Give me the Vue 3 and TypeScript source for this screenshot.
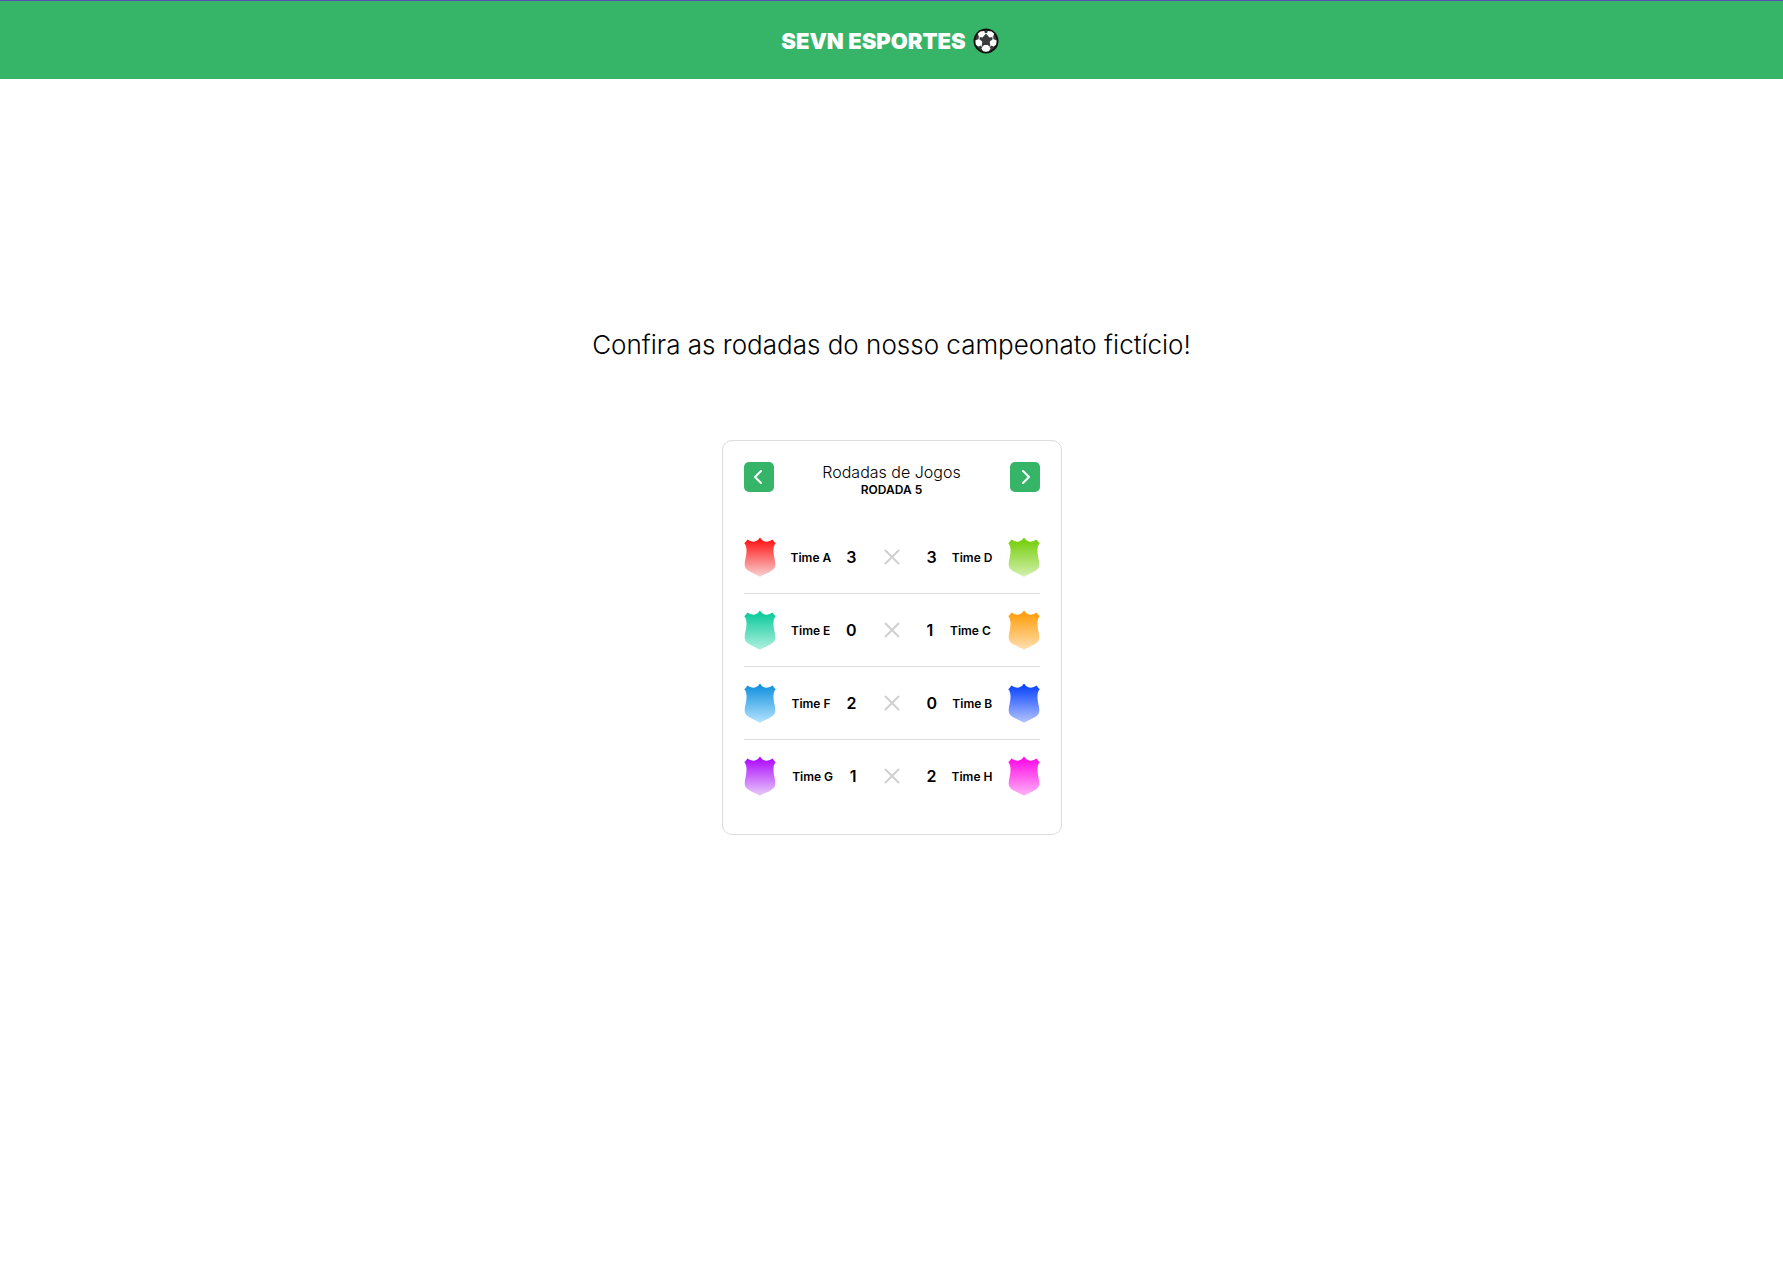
<script setup lang="ts">
import { computed, ref } from 'vue'

interface Team {
  id: string
  name: string
  from: string
  to: string
}

interface Match {
  home: Team
  homeScore: number
  awayScore: number
  away: Team
}

function team(letter: string, from: string, to: string): Team {
  return { id: letter.toLowerCase(), name: `Time ${letter}`, from, to }
}

const a = team('A', '#ff0a0a', '#f8d2d2')
const b = team('B', '#003cff', '#b4c4ff')
const c = team('C', '#ff9900', '#ffe0b2')
const d = team('D', '#70cc00', '#d4f0b0')
const e = team('E', '#00c896', '#b2f0e0')
const f = team('F', '#0a8cdc', '#b4e4ff')
const g = team('G', '#aa00ff', '#e8ccf8')
const h = team('H', '#ff00e6', '#ffb4f6')

const rounds: Record<number, Match[]> = {
  5: [
    { home: a, homeScore: 3, awayScore: 3, away: d },
    { home: e, homeScore: 0, awayScore: 1, away: c },
    { home: f, homeScore: 2, awayScore: 0, away: b },
    { home: g, homeScore: 1, awayScore: 2, away: h },
  ],
}

const round = ref(5)
const matches = computed(() => rounds[round.value] ?? [])
const teams = [a, b, c, d, e, f, g, h]

function go(step: number) {
  if (rounds[round.value + step]) round.value += step
}

const shield =
  'M16 .5Q17.700 3.800 21 4.500Q25.500 5.200 28.500 2.500L30 4.500L31.700 6.300C29.500 8.800 29.300 12 29.600 16C29.900 21 31.500 23 31.300 28C31 34.500 22 35.800 16 39.800C10 35.800 1 34.500 .7 28C.5 23 2.100 21 2.400 16C2.700 12 2.500 8.800 .3 6.300L2 4.500L3.500 2.500Q6.500 5.200 11 4.500Q14.300 3.800 16 .5Z'
</script>

<template>
  <header class="topbar">
    <h1 class="brand">
      SEVN ESPORTES
      <svg class="ball" viewBox="0 0 26 26" aria-hidden="true">
        <circle cx="13" cy="13" r="12.500" fill="#111" />
        <circle cx="13" cy="13" r="10.600" fill="#3b3b3d" />
        <g fill="#fff">
          <path d="M7.300 3.600L11.200 3L12.400 6.300L9.500 9.600L6 9L4.800 5.800Z" />
          <path d="M18.700 3.600L14.800 3L13.600 6.300L16.500 9.600L20 9L21.200 5.800Z" />
          <path d="M2.400 12.500L5.800 11L9.300 13.500L8.800 17.200L5.200 18.500L2.800 16.400Z" />
          <path d="M23.600 12.500L20.200 11L16.700 13.500L17.200 17.200L20.800 18.500L23.200 16.400Z" />
          <path d="M11 17H15L17.600 20.400L15.800 23.200L13 23.800L10.200 23.200L8.400 20.400Z" />
        </g>
        <g stroke="#e4e4e4" stroke-width="1" fill="none">
          <path d="M11.500 5.500H14.500M6.500 8L5.800 12M19.500 8L20.200 12M8 17L10 20M18 17L16 20" />
        </g>
        <path d="M13 9L16.900 11.900L15.400 16.400H10.600L9.100 11.900Z" fill="#3b3b3d" />
      </svg>
    </h1>
  </header>

  <main class="page">
    <h2 class="headline">Confira as rodadas do nosso campeonato fictício!</h2>

    <section class="card" aria-labelledby="card-title">
      <div class="card-head">
        <button type="button" class="nav" aria-label="Rodada anterior" @click="go(-1)">
          <svg viewBox="0 0 30 30"><path d="M17 9L11 15L17 21" /></svg>
        </button>
        <div class="titles">
          <h3 id="card-title" class="title">Rodadas de Jogos</h3>
          <p class="round">RODADA {{ round }}</p>
        </div>
        <button type="button" class="nav" aria-label="Próxima rodada" @click="go(1)">
          <svg viewBox="0 0 30 30"><path d="M13 9L19 15L13 21" /></svg>
        </button>
      </div>

      <svg class="defs" aria-hidden="true">
        <defs>
          <linearGradient v-for="t in teams" :id="`grad-${t.id}`" :key="t.id" x1="0" y1="0" x2="0" y2="1">
            <stop offset="0" :stop-color="t.from" />
            <stop offset="1" :stop-color="t.to" />
          </linearGradient>
        </defs>
      </svg>

      <ul class="matches">
        <li v-for="m in matches" :key="m.home.id" class="match">
          <div class="side">
            <svg class="shield" viewBox="0 0 32 40"><path :d="shield" :fill="`url(#grad-${m.home.id})`" /></svg>
            <span class="name">{{ m.home.name }}</span>
            <span class="score">{{ m.homeScore }}</span>
          </div>
          <svg class="versus" viewBox="0 0 16 16"><path d="M1.500 1.500L14.500 14.500M14.500 1.500L1.500 14.500" /></svg>
          <div class="side">
            <span class="score">{{ m.awayScore }}</span>
            <span class="name">{{ m.away.name }}</span>
            <svg class="shield" viewBox="0 0 32 40"><path :d="shield" :fill="`url(#grad-${m.away.id})`" /></svg>
          </div>
        </li>
      </ul>
    </section>
  </main>
</template>

<style>
body {
  margin: 0;
  background: #fff;
  color: #000;
  font-family: Inter, 'Liberation Sans', sans-serif;
}
</style>

<style scoped>
h1,
h2,
h3,
p,
ul {
  margin: 0;
  padding: 0;
}

.topbar {
  display: flex;
  align-items: center;
  justify-content: center;
  box-sizing: border-box;
  height: 79px;
  padding-top: 2px;
  border-top: 1px solid #5b4bb4;
  background: #36b568;
  color: #fff;
}

.brand {
  display: flex;
  align-items: center;
  gap: 4px;
  font-size: 22px;
  font-weight: 900;
  line-height: 28px;
}

.ball {
  width: 32px;
  height: 26px;
}

.page {
  display: flex;
  flex-direction: column;
  align-items: center;
  padding: 246px 16px 64px;
}

.headline {
  font-size: 26px;
  font-weight: 300;
  line-height: 40px;
  text-align: center;
}

.card {
  box-sizing: border-box;
  width: 100%;
  max-width: 340px;
  margin-top: 75px;
  padding: 21px 21px 22px;
  border: 1px solid #dcdcdc;
  border-radius: 10px;
}

.card-head {
  display: flex;
  align-items: flex-start;
  justify-content: space-between;
  margin-bottom: 24px;
}

.nav {
  width: 30px;
  height: 30px;
  padding: 0;
  border: 0;
  border-radius: 5px;
  background: #36b568;
  cursor: pointer;
}

.nav svg {
  display: block;
  fill: none;
  stroke: #fff;
  stroke-width: 2;
  stroke-linecap: round;
  stroke-linejoin: round;
}

.titles {
  text-align: center;
}

.title {
  font-size: 16px;
  font-weight: 300;
  line-height: 20px;
}

.round {
  font-size: 12px;
  font-weight: 600;
  line-height: 15px;
}

.defs {
  position: absolute;
  width: 0;
  height: 0;
}

.matches {
  list-style: none;
}

.match {
  display: flex;
  align-items: center;
  justify-content: space-between;
  padding: 16px 0;
  border-bottom: 1px solid #dcdcdc;
}

.match:last-child {
  border-bottom: 0;
}

.side {
  display: flex;
  align-items: center;
  justify-content: space-between;
  width: 113px;
}

.shield {
  width: 32px;
  height: 40px;
}

.name {
  font-size: 12px;
  font-weight: 600;
}

.score {
  font-size: 16px;
  font-weight: 600;
}

.versus {
  width: 16px;
  height: 16px;
  fill: none;
  stroke: #d0d0d0;
  stroke-width: 2;
  stroke-linecap: round;
}
</style>
